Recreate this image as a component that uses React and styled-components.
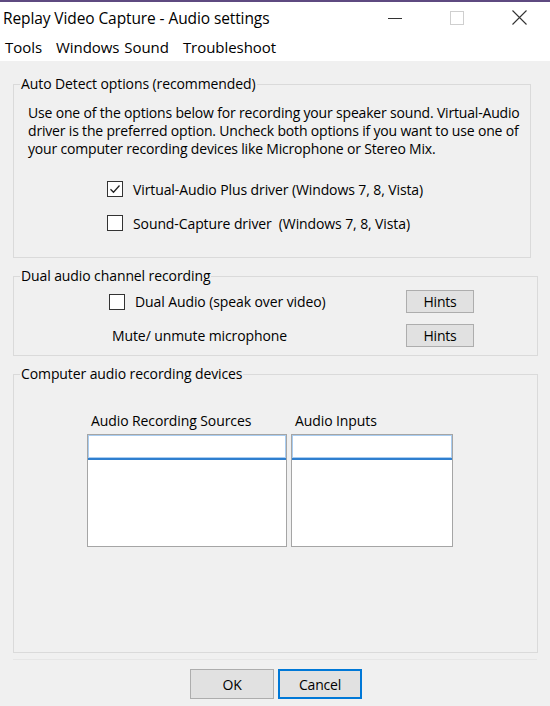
import React from "react";
import styled, { createGlobalStyle } from "styled-components";

const Global = createGlobalStyle`
  html, body { margin: 0; padding: 0; }
  body {
    width: 550px;
    height: 706px;
    overflow: hidden;
    background: #f0f0f0;
    font-family: "Open Sans", "Noto Sans", sans-serif;
    color: #000;
  }
`;

const Window = styled.div`
  width: 550px;
  height: 706px;
  display: flex;
  flex-direction: column;
  background: #f0f0f0;
`;

const Stripe = styled.div`
  height: 2px;
  background: #5e4a80;
`;

const TitleBar = styled.div`
  height: 31px;
  background: #fff;
  display: flex;
  align-items: center;
  justify-content: space-between;
`;

const Title = styled.div`
  padding-left: 3px;
  font-size: 15.5px;
  letter-spacing: -0.1px;
`;

const Controls = styled.div`
  display: flex;
  height: 100%;
`;

const Ctl = styled.div`
  width: 62px;
  height: 100%;
  display: flex;
  align-items: center;
  justify-content: center;
`;

const MenuBar = styled.div`
  height: 28px;
  background: #fff;
  display: flex;
  align-items: center;
  gap: 14px;
  padding-left: 5px;
  font-size: 15px;
  letter-spacing: -0.05px;
  word-spacing: 1px;
`;

const Content = styled.div`
  flex: 1;
  display: flex;
  flex-direction: column;
  padding: 14px 0 0 13px;
`;

const Group = styled.fieldset`
  margin: 0 0 ${(p) => p.$mb}px 0;
  padding: 0;
  width: ${(p) => p.$w}px;
  height: ${(p) => p.$h}px;
  box-sizing: border-box;
  border: 1px solid #dadada;
  font-size: 14px;
  letter-spacing: -0.1px;
`;

const Legend = styled.legend`
  margin-left: 6px;
  padding: 0 1px;
  font-size: 14px;
  line-height: 18px;
`;

const Para = styled.p`
  margin: 11px 0 0 14px;
  width: 500px;
  line-height: 18px;
  font-size: 14px;
  letter-spacing: -0.18px;
`;

const CheckList = styled.div`
  display: flex;
  flex-direction: column;
  gap: ${(p) => p.$gap}px;
  margin: ${(p) => p.$mt}px 0 0 ${(p) => p.$ml}px;
`;

const CheckRow = styled.label`
  display: flex;
  align-items: center;
  gap: 10px;
  height: 18px;
  white-space: pre;
`;

const Box = styled.span`
  width: 14px;
  height: 14px;
  border: 1px solid #333;
  background: #fff;
  display: flex;
  align-items: center;
  justify-content: center;
`;

const Row = styled.div`
  display: flex;
  align-items: center;
  height: 23px;
  margin-top: ${(p) => p.$mt}px;
`;

const RowLabel = styled.div`
  width: ${(p) => p.$w}px;
  padding-left: ${(p) => p.$pl}px;
  box-sizing: border-box;
  white-space: pre;
`;

const Button = styled.button`
  width: ${(p) => p.$w}px;
  height: ${(p) => p.$h}px;
  box-sizing: border-box;
  background: #e1e1e1;
  border: ${(p) => (p.$focus ? "2px solid #0078d7" : "1px solid #adadad")};
  font-family: "Open Sans", "Noto Sans", sans-serif;
  font-size: 14px;
  letter-spacing: -0.2px;
  color: #000;
  padding: 0;
`;

const Lists = styled.div`
  display: flex;
  gap: 4px;
  margin: 28px 0 0 73px;
`;

const ListCol = styled.div`
  display: flex;
  flex-direction: column;
  width: ${(p) => p.$w}px;
`;

const ListHead = styled.div`
  height: 20px;
  line-height: 20px;
  padding-left: 4px;
  margin-bottom: 3px;
  white-space: nowrap;
`;

const ListBox = styled.div`
  height: 113px;
  background: #fff;
  border: 1px solid #a5a5a5;
  box-sizing: border-box;
`;

const ListInput = styled.div`
  height: 25px;
  box-sizing: border-box;
  border-bottom: 2px solid #2f7fcf;
  box-shadow: inset 0 0 0 1px #a9cdf1;
`;

const Separator = styled.div`
  width: 524px;
  height: 1px;
  background: #e6e6e6;
  margin-top: 6px;
`;

const Footer = styled.div`
  display: flex;
  gap: 4px;
  margin: 9px 0 0 177px;
`;

const CheckMark = () => (
  <svg width="12" height="12" viewBox="0 0 12 12">
    <polyline points="1.5,6.2 4.5,9.2 10.5,2.5" fill="none" stroke="#222" strokeWidth="1.3" />
  </svg>
);

const Check = ({ checked, children }) => (
  <CheckRow>
    <Box>{checked && <CheckMark />}</Box>
    <span>{children}</span>
  </CheckRow>
);

export default function App() {
  return (
    <>
      <Global />
      <Window>
        <Stripe />
        <TitleBar>
          <Title>Replay Video Capture - Audio settings</Title>
          <Controls>
            <Ctl>
              <svg width="14" height="14" viewBox="0 0 14 14">
                <line x1="0" y1="7.5" x2="14" y2="7.5" stroke="#333" strokeWidth="1" />
              </svg>
            </Ctl>
            <Ctl>
              <svg width="14" height="14" viewBox="0 0 14 14">
                <rect x="0.5" y="0.5" width="13" height="13" fill="none" stroke="#cfcfcf" strokeWidth="1" />
              </svg>
            </Ctl>
            <Ctl>
              <svg width="15" height="15" viewBox="0 0 15 15">
                <path d="M0.5 0.5 L14.5 14.5 M14.5 0.5 L0.5 14.5" stroke="#333" strokeWidth="1.1" />
              </svg>
            </Ctl>
          </Controls>
        </TitleBar>
        <MenuBar>
          <span>Tools</span>
          <span>Windows Sound</span>
          <span>Troubleshoot</span>
        </MenuBar>
        <Content>
          <Group $w={518} $h={183} $mb={9}>
            <Legend>Auto Detect options (recommended)</Legend>
            <Para>
              Use one of the options below for recording your speaker sound. Virtual-Audio driver is the preferred
              option. Uncheck both options if you want to use one of your computer recording devices like Microphone
              or Stereo Mix.
            </Para>
            <CheckList $gap={16} $mt={22} $ml={93}>
              <Check checked>Virtual-Audio Plus driver (Windows 7, 8, Vista)</Check>
              <Check>Sound-Capture driver  (Windows 7, 8, Vista)</Check>
            </CheckList>
          </Group>
          <Group $w={525} $h={89} $mb={9}>
            <Legend>Dual audio channel recording</Legend>
            <Row $mt={5}>
              <RowLabel $w={392} $pl={95}>
                <Check>Dual Audio (speak over video)</Check>
              </RowLabel>
              <Button $w={68} $h={23}>Hints</Button>
            </Row>
            <Row $mt={11}>
              <RowLabel $w={392} $pl={98}>Mute/ unmute microphone</RowLabel>
              <Button $w={68} $h={23}>Hints</Button>
            </Row>
          </Group>
          <Group $w={525} $h={288} $mb={0}>
            <Legend>Computer audio recording devices</Legend>
            <Lists>
              <ListCol $w={200}>
                <ListHead>Audio Recording Sources</ListHead>
                <ListBox>
                  <ListInput />
                </ListBox>
              </ListCol>
              <ListCol $w={162}>
                <ListHead>Audio Inputs</ListHead>
                <ListBox>
                  <ListInput />
                </ListBox>
              </ListCol>
            </Lists>
          </Group>
          <Separator />
          <Footer>
            <Button $w={84} $h={30}>OK</Button>
            <Button $w={84} $h={30} $focus>Cancel</Button>
          </Footer>
        </Content>
      </Window>
    </>
  );
}
